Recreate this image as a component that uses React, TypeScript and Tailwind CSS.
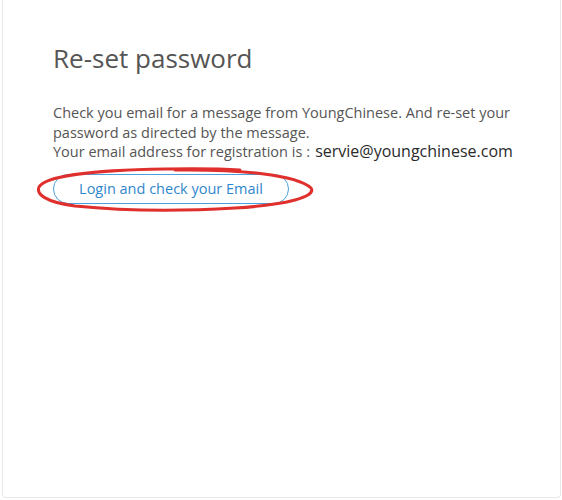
import React from "react";

export default function App() {
  return (
    <div className="w-[562px] h-[500px] bg-white overflow-hidden">
      <div className="ml-[2px] mr-[1px] h-[498px] border-l border-r border-b border-[#e8e8e8] rounded-b-[4px] bg-white pl-[50px] pt-[40px] relative" style={{ fontFamily: '"Open Sans", "Noto Sans", sans-serif' }}>
        <h1 className="text-[26px] leading-[36px] text-[#555555] font-normal">Re-set password</h1>
        <div className="mt-[27px] text-[14.5px] leading-[19.5px] text-[#555555] w-[480px]">
          <p>Check you email for a message from YoungChinese. And re-set your password as directed by the message.</p>
          <p className="flex items-baseline">
            <span>Your email address for registration is</span>
            <span className="ml-[4px]">:</span>
            <span className="text-[16px] text-[#2a2a2a] ml-[5px]">servie@youngchinese.com</span>
          </p>
        </div>
        <div className="mt-[12px] relative w-[236px]">
          <button className="w-[236px] h-[30px] rounded-full border border-[#4aa0dc] text-[#2f87cc] text-[14.5px] bg-white">Login and check your Email</button>
          <svg className="absolute left-[-18px] top-[-7px] pointer-events-none" width="282" height="46" viewBox="0 0 282 46">
            <path d="M140 3 C 205 2, 262 8, 276 21 C 282 30, 250 38, 200 41 C 150 44, 90 44, 40 39 C 10 35, 1 27, 4 20 C 10 9, 60 3, 130 2 C 160 1.5, 190 2, 205 3" fill="none" stroke="#e0302d" strokeWidth="3" strokeLinecap="round" />
          </svg>
        </div>
      </div>
    </div>
  );
}
